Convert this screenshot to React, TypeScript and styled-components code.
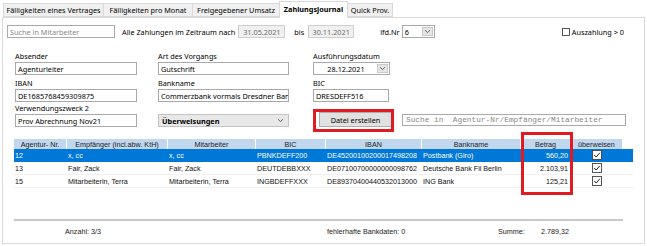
import React from 'react';
import styled, { createGlobalStyle } from 'styled-components';

const Global = createGlobalStyle`
  html, body { margin: 0; padding: 0; background: #fff; }
  body { font-family: "Noto Sans", "Liberation Sans", sans-serif; font-size: 7.3px; color: #000; }
  * { box-sizing: border-box; }
`;

const Window = styled.div`
  position: relative;
  width: 647px;
  height: 246px;
  overflow: hidden;
  padding: 1px 2px 0 2px;
  background: #fff;
`;

const TabStrip = styled.div`
  display: flex;
  align-items: flex-end;
  height: 16px;
  padding-left: 1px;
`;

const Tab = styled.div<{ $w: number; $active?: boolean }>`
  width: ${(p) => p.$w}px;
  height: ${(p) => (p.$active ? 17 : 14)}px;
  margin-left: -1px;
  margin-bottom: ${(p) => (p.$active ? -1 : 0)}px;
  position: relative;
  z-index: ${(p) => (p.$active ? 2 : 1)};
  border: 1px solid #d9d9d9;
  border-bottom: ${(p) => (p.$active ? 'none' : '1px solid #d9d9d9')};
  background: ${(p) => (p.$active ? '#fff' : '#f0f0f0')};
  font-weight: ${(p) => (p.$active ? 700 : 400)};
  display: flex;
  align-items: center;
  justify-content: center;
  white-space: nowrap;
  padding-bottom: ${(p) => (p.$active ? 2 : 0)}px;
  &:first-child { margin-left: 0; }
`;

const Panel = styled.div`
  height: 227px;
  border: 1px solid #dadada;
  display: flex;
  flex-direction: column;
`;

const TopBar = styled.div`
  display: flex;
  align-items: center;
  height: 13px;
  margin-top: 7px;
  padding-left: 4px;
  white-space: nowrap;
`;

const TextBox = styled.div<{ $w: number; $ml?: number; $disabled?: boolean; $center?: boolean }>`
  width: ${(p) => p.$w}px;
  height: 13px;
  margin-left: ${(p) => p.$ml ?? 0}px;
  border: 1px solid ${(p) => (p.$disabled ? '#cfcfcf' : '#a9a9a9')};
  background: ${(p) => (p.$disabled ? '#f0f0f0' : '#fff')};
  color: ${(p) => (p.$disabled ? '#6d6d6d' : '#000')};
  display: flex;
  align-items: center;
  justify-content: ${(p) => (p.$center ? 'center' : 'flex-start')};
  padding: 0 2px;
  white-space: nowrap;
  overflow: hidden;
  flex-shrink: 0;
`;

const Placeholder = styled.span`
  color: #8a8a8a;
`;

const Caption = styled.span<{ $ml?: number }>`
  margin-left: ${(p) => p.$ml ?? 0}px;
  white-space: nowrap;
`;

const Combo = styled.div<{ $w: number; $ml?: number }>`
  width: ${(p) => p.$w}px;
  height: 13px;
  margin-left: ${(p) => p.$ml ?? 0}px;
  border: 1px solid #a9a9a9;
  background: #fff;
  display: flex;
  align-items: stretch;
  flex-shrink: 0;
`;

const ComboText = styled.div<{ $center?: boolean }>`
  flex: 1;
  display: flex;
  align-items: center;
  justify-content: ${(p) => (p.$center ? 'center' : 'flex-start')};
  padding-left: 2px;
  white-space: nowrap;
`;

const DropBtn = styled.div`
  width: 11px;
  margin: 1px;
  background: #e6e6e6;
  border: 1px solid #c9c9c9;
  display: flex;
  align-items: center;
  justify-content: center;
`;

const Spacer = styled.div`
  flex: 1;
`;

const CheckWrap = styled.div`
  display: flex;
  align-items: center;
  margin-right: 20px;
  gap: 2px;
`;

const EmptyCheck = styled.div`
  width: 8px;
  height: 8px;
  border: 1px solid #555;
  background: #fff;
`;

const FormRow = styled.div<{ $mt: number }>`
  display: grid;
  grid-template-columns: 143px 154px 1fr;
  padding-left: 12px;
  margin-top: ${(p) => p.$mt}px;
`;

const Field = styled.div`
  display: flex;
  flex-direction: column;
`;

const Label = styled.div`
  height: 11px;
  line-height: 11px;
  white-space: nowrap;
`;

const FieldCol3 = styled(Field)`
  margin-left: 1px;
`;

const Select = styled.div`
  width: 131px;
  height: 13px;
  margin-top: 11px;
  border: 1px solid #c3c3c3;
  background: #e8e8e8;
  display: flex;
  align-items: center;
  justify-content: space-between;
  padding: 0 4px 0 3px;
  font-weight: 700;
`;

const ActionCell = styled.div`
  display: flex;
  align-items: flex-end;
  padding-left: 7px;
`;

const Button = styled.div`
  width: 73px;
  height: 15px;
  background: #e1e1e1;
  border: 1px solid #adadad;
  display: flex;
  align-items: center;
  justify-content: center;
`;

const MonoSearch = styled.div`
  width: 224px;
  height: 12px;
  margin-left: 10px;
  margin-bottom: 1px;
  border: 1px solid #a9a9a9;
  background: #fff;
  font-family: "Liberation Mono", monospace;
  font-size: 7.8px;
  color: #8a8a8a;
  display: flex;
  align-items: center;
  padding-left: 3px;
  white-space: pre;
`;

const cols = '53px 101px 88px 70px 96px 99px 50px 52px 10px';

const Table = styled.div`
  margin: 12px 0 0 11px;
  width: 619px;
  font-family: "Liberation Sans", Arial, sans-serif;
  font-size: 7.2px;
`;

const HeaderRow = styled.div`
  display: grid;
  grid-template-columns: ${cols};
  height: 10px;
`;

const HeadCell = styled.div<{ $blank?: boolean }>`
  background: ${(p) => (p.$blank ? '#fff' : '#c1d7ee')};
  border-right: 1px solid #fff;
  color: #222;
  display: flex;
  align-items: center;
  justify-content: center;
  white-space: nowrap;
  overflow: hidden;
`;

const DataRow = styled.div<{ $sel?: boolean }>`
  display: grid;
  grid-template-columns: ${cols};
  height: 13px;
  background: ${(p) => (p.$sel ? '#0078d7' : '#fff')};
  color: ${(p) => (p.$sel ? '#fff' : '#111')};
  border-bottom: 1px solid ${(p) => (p.$sel ? '#0078d7' : '#f1f1f1')};
`;

const Cell = styled.div<{ $align?: 'left' | 'right' | 'center' }>`
  display: flex;
  align-items: center;
  justify-content: ${(p) =>
    p.$align === 'right' ? 'flex-end' : p.$align === 'center' ? 'center' : 'flex-start'};
  padding: ${(p) => (p.$align === 'right' ? '0 3px 0 0' : p.$align === 'center' ? '0' : '0 0 0 1px')};
  white-space: nowrap;
  overflow: hidden;
`;

const Footer = styled.div`
  margin-top: auto;
  height: 24px;
  padding-left: 11px;
  font-family: "Liberation Sans", Arial, sans-serif;
  font-size: 7.2px;
  color: #222;
`;

const FooterLine = styled.div`
  width: 609px;
  height: 2px;
  background: #c8c8c8;
`;

const FooterRow = styled.div`
  display: flex;
  align-items: center;
  height: 18px;
  padding-left: 51px;
  margin-top: 1px;
`;

const FooterItem = styled.div<{ $w: number }>`
  width: ${(p) => p.$w}px;
  white-space: nowrap;
`;

const Highlight = styled.div<{ $x: number; $y: number; $w: number; $h: number }>`
  position: absolute;
  left: ${(p) => p.$x}px;
  top: ${(p) => p.$y}px;
  width: ${(p) => p.$w}px;
  height: ${(p) => p.$h}px;
  border: 3px solid #e01b22;
  pointer-events: none;
  z-index: 5;
`;

const Chevron = () => (
  <svg width="7" height="5" viewBox="0 0 7 5">
    <path d="M1 1.2 L3.5 3.6 L6 1.2" fill="none" stroke="#555" strokeWidth="0.9" />
  </svg>
);

const CheckBox = () => (
  <svg width="10" height="10" viewBox="0 0 10 10">
    <rect x="0.5" y="0.5" width="9" height="9" fill="#fff" stroke="#444" strokeWidth="0.9" />
    <path d="M2.2 5 L4.2 7 L7.8 2.8" fill="none" stroke="#222" strokeWidth="1" />
  </svg>
);

type Row = { nr: string; emp: string; mit: string; bic: string; iban: string; bank: string; betrag: string };

const rows: Row[] = [
  { nr: '12', emp: 'x, cc', mit: 'x, cc', bic: 'PBNKDEFF200', iban: 'DE45200100200017498208', bank: 'Postbank (Giro)', betrag: '560,20' },
  { nr: '13', emp: 'Fair, Zack', mit: 'Fair, Zack', bic: 'DEUTDEBBXXX', iban: 'DE07100700000000098762', bank: 'Deutsche Bank Fil Berlin', betrag: '2.103,91' },
  { nr: '15', emp: 'Mitarbeiterin, Terra', mit: 'Mitarbeiterin, Terra', bic: 'INGBDEFFXXX', iban: 'DE89370400440532013000', bank: 'ING Bank', betrag: '125,21' },
];

export default function App() {
  return (
    <>
      <Global />
      <Window>
        <TabStrip>
          <Tab $w={101}>Fälligkeiten eines Vertrages</Tab>
          <Tab $w={90}>Fälligkeiten pro Monat</Tab>
          <Tab $w={88}>Freigegebener Umsatz</Tab>
          <Tab $w={69} $active>Zahlungsjournal</Tab>
          <Tab $w={46}>Quick Prov.</Tab>
        </TabStrip>
        <Panel>
          <TopBar>
            <TextBox $w={108}>
              <Placeholder>Suche in Mitarbeiter</Placeholder>
            </TextBox>
            <Caption $ml={7}>Alle Zahlungen im Zeitraum nach</Caption>
            <TextBox $w={47} $ml={3} $disabled $center>31.05.2021</TextBox>
            <Caption $ml={9}>bis</Caption>
            <TextBox $w={46} $ml={4} $disabled $center>30.11.2021</TextBox>
            <Caption $ml={26}>lfd.Nr</Caption>
            <Combo $w={33} $ml={2}>
              <ComboText>6</ComboText>
              <DropBtn>
                <Chevron />
              </DropBtn>
            </Combo>
            <Spacer />
            <CheckWrap>
              <EmptyCheck />
              <span>Auszahlung &gt; 0</span>
            </CheckWrap>
          </TopBar>

          <FormRow $mt={13}>
            <Field>
              <Label>Absender</Label>
              <TextBox $w={122}>Agenturleiter</TextBox>
            </Field>
            <Field>
              <Label>Art des Vorgangs</Label>
              <TextBox $w={131}>Gutschrift</TextBox>
            </Field>
            <FieldCol3>
              <Label>Ausführungsdatum</Label>
              <Combo $w={77}>
                <ComboText $center>28.12.2021</ComboText>
                <DropBtn>
                  <Chevron />
                </DropBtn>
              </Combo>
            </FieldCol3>
          </FormRow>

          <FormRow $mt={3}>
            <Field>
              <Label>IBAN</Label>
              <TextBox $w={122}>DE1685768459309875</TextBox>
            </Field>
            <Field>
              <Label>Bankname</Label>
              <TextBox $w={131}>Commerzbank vormals Dresdner Ban</TextBox>
            </Field>
            <FieldCol3>
              <Label>BIC</Label>
              <TextBox $w={76}>DRESDEFF516</TextBox>
            </FieldCol3>
          </FormRow>

          <FormRow $mt={1}>
            <Field>
              <Label>Verwendungszweck 2</Label>
              <TextBox $w={122}>Prov Abrechnung Nov21</TextBox>
            </Field>
            <Field>
              <Select>
                <span>Überweisungen</span>
                <Chevron />
              </Select>
            </Field>
            <ActionCell>
              <Button>Datei erstellen</Button>
              <MonoSearch>Suche in  Agentur-Nr/Empfänger/Mitarbeiter</MonoSearch>
            </ActionCell>
          </FormRow>

          <Table>
            <HeaderRow>
              <HeadCell>Agentur- Nr.</HeadCell>
              <HeadCell>Empfänger (incl.abw. KtH)</HeadCell>
              <HeadCell>Mitarbeiter</HeadCell>
              <HeadCell>BIC</HeadCell>
              <HeadCell>IBAN</HeadCell>
              <HeadCell>Bankname</HeadCell>
              <HeadCell>Betrag</HeadCell>
              <HeadCell>überweisen</HeadCell>
              <HeadCell $blank />
            </HeaderRow>
            {rows.map((r, i) => (
              <DataRow key={r.nr} $sel={i === 0}>
                <Cell>{r.nr}</Cell>
                <Cell>{r.emp}</Cell>
                <Cell>{r.mit}</Cell>
                <Cell>{r.bic}</Cell>
                <Cell>{r.iban}</Cell>
                <Cell>{r.bank}</Cell>
                <Cell $align="right">{r.betrag}</Cell>
                <Cell $align="center">
                  <CheckBox />
                </Cell>
                <Cell />
              </DataRow>
            ))}
          </Table>

          <Footer>
            <FooterLine />
            <FooterRow>
              <FooterItem $w={262}>Anzahl: 3/3</FooterItem>
              <FooterItem $w={171}>fehlerhafte Bankdaten: 0</FooterItem>
              <FooterItem $w={43}>Summe:</FooterItem>
              <FooterItem $w={60}>2.789,32</FooterItem>
            </FooterRow>
          </Footer>
        </Panel>
        <Highlight $x={313} $y={109} $w={81} $h={23} />
        <Highlight $x={521} $y={132} $w={52} $h={63} />
      </Window>
    </>
  );
}
